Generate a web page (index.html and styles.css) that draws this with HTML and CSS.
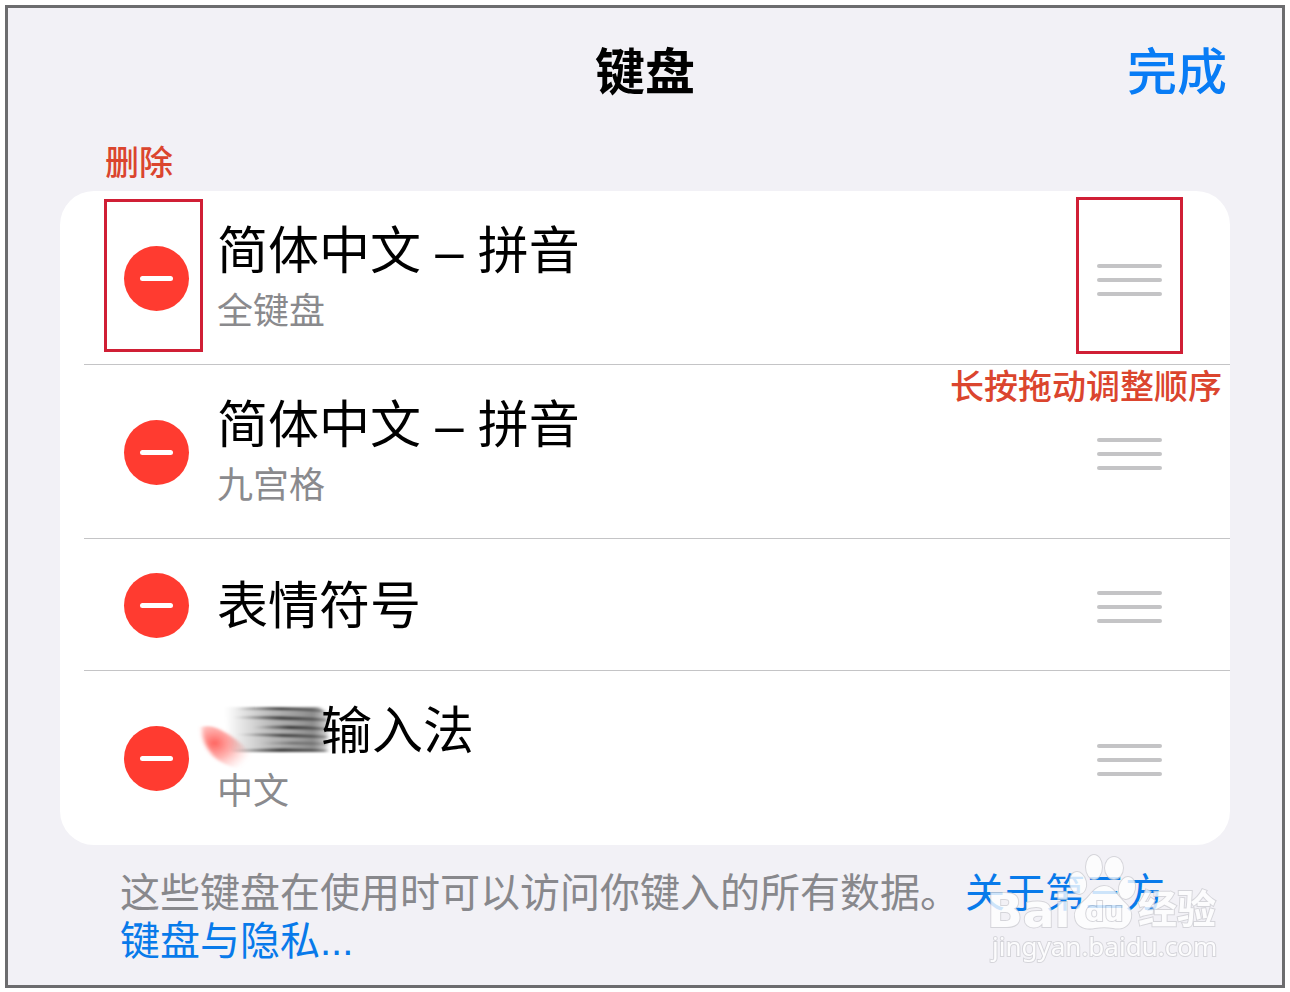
FILE: index.html
```html
<!DOCTYPE html>
<html lang="zh-CN">
<head>
    <meta charset="UTF-8">
    <meta name="viewport" content="width=device-width, initial-scale=1.0">
    <title>键盘</title>
    <link rel="stylesheet" href="styles.css">
</head>
<body>
  <div class="panel">
    <header class="topbar">
      <h1>键盘</h1>
      <button type="button" class="done">完成</button>
    </header>

    <main>
      <p class="note note-delete">删除</p>

      <ul class="keyboards">
        <li class="keyboard">
          <button type="button" class="remove marked" aria-label="删除 全键盘"></button>
          <div class="names">
            <h2>简体中文 – 拼音</h2>
            <p>全键盘</p>
          </div>
          <button type="button" class="handle marked" aria-label="移动 全键盘"><span></span><span></span><span></span></button>
        </li>
        <li class="keyboard">
          <button type="button" class="remove" aria-label="删除 九宫格"></button>
          <div class="names">
            <h2>简体中文 – 拼音</h2>
            <p>九宫格</p>
          </div>
          <button type="button" class="handle" aria-label="移动 九宫格"><span></span><span></span><span></span></button>
          <p class="note note-drag">长按拖动调整顺序</p>
        </li>
        <li class="keyboard short">
          <button type="button" class="remove" aria-label="删除 表情符号"></button>
          <div class="names">
            <h2>表情符号</h2>
          </div>
          <button type="button" class="handle" aria-label="移动 表情符号"><span></span><span></span><span></span></button>
        </li>
        <li class="keyboard">
          <button type="button" class="remove" aria-label="删除 输入法"></button>
          <div class="names">
            <h2 class="smudged">输入法
              <!-- Mancha que tapa la marca -->
              <svg class="smudge" viewBox="0 0 140 76" aria-hidden="true">
                <defs>
                  <linearGradient id="fade">
                    <stop offset="0" stop-color="#000" stop-opacity="0"/>
                    <stop offset="0.45" stop-color="#000" stop-opacity="0.28"/>
                    <stop offset="0.85" stop-color="#000" stop-opacity="0.45"/>
                    <stop offset="1" stop-color="#000" stop-opacity="0.15"/>
                  </linearGradient>
                  <linearGradient id="streak">
                    <stop offset="0" stop-color="#000" stop-opacity="0"/>
                    <stop offset="0.5" stop-color="#000" stop-opacity="0.65"/>
                    <stop offset="1" stop-color="#000" stop-opacity="0.3"/>
                  </linearGradient>
                  <radialGradient id="red" cx="0.25" cy="0.4" r="0.75">
                    <stop offset="0" stop-color="#ff5a55" stop-opacity="0.95"/>
                    <stop offset="0.45" stop-color="#ff7a75" stop-opacity="0.6"/>
                    <stop offset="1" stop-color="#ffb0ad" stop-opacity="0"/>
                  </radialGradient>
                  <filter id="soft" x="-20%" y="-20%" width="140%" height="140%">
                    <feGaussianBlur stdDeviation="2 1"/>
                  </filter>
                </defs>
                <path d="M5 25Q12 22 22 27Q40 36 54 52Q60 68 44 67Q28 65 16 54Q4 40 5 25Z" fill="url(#red)" filter="url(#soft)"/>
                <g filter="url(#soft)">
                  <path d="M28 5H122L132 12L130 50H34Z" fill="url(#fade)"/>
                  <path d="M40 6Q90 4 126 8V10Q90 7 40 8Z" fill="url(#streak)"/>
                  <path d="M36 15Q90 13 130 17V19Q90 18 36 16Z" fill="url(#streak)"/>
                  <path d="M56 25Q94 22 130 26V28Q94 27 56 26Z" fill="url(#streak)"/>
                  <path d="M40 32Q90 31 130 34V36Q90 35 40 33Z" fill="url(#streak)"/>
                  <path d="M62 41Q94 39 130 41V43Q94 42 62 42Z" fill="url(#streak)" opacity="0.5"/>
                  <path d="M36 48Q94 45 130 48V50H36Z" fill="url(#streak)"/>
                </g>
              </svg>
            </h2>
            <p>中文</p>
          </div>
          <button type="button" class="handle" aria-label="移动 输入法"><span></span><span></span><span></span></button>
        </li>
      </ul>

      <p class="privacy">这些键盘在使用时可以访问你键入的所有数据。<a href="#">关于第三方键盘与隐私...</a></p>
    </main>

    <!-- Marca de agua -->
    <svg class="watermark" viewBox="0 0 240 120" aria-hidden="true">
      <g class="mark">
        <text class="brand" x="1" y="76" font-size="47">Bai</text>
        <ellipse cx="108" cy="16" rx="8" ry="12"/>
        <ellipse cx="128" cy="17" rx="9" ry="11"/>
        <ellipse cx="92" cy="32" rx="8" ry="11" transform="rotate(-12 92 32)"/>
        <ellipse cx="141" cy="37" rx="8" ry="11" transform="rotate(12 141 37)"/>
        <path d="M118 35C127 35 130 43 137 50C144 56 146 61 145 67C143 76 135 79 127 77C121 76 115 76 109 77C100 79 90 76 89 66C88 60 92 55 98 50C105 44 109 35 118 35Z"/>
        <text class="du" x="99" y="70" font-size="27">du</text>
        <text class="cn" x="152" y="72" font-size="39">经验</text>
        <text class="site" x="6" y="105" font-size="26">jingyan.baidu.com</text>
      </g>
    </svg>
  </div>
</body>
</html>
```

FILE: styles.css
```css
* {
  box-sizing: border-box;
}

body {
  margin: 0;
  padding: 5px;
  background-color: #fff;
  color: #000;
  font-family: "Liberation Sans", "Noto Sans CJK SC", sans-serif;
}

h1, h2, p, ul {
  margin: 0;
  padding: 0;
  font-weight: 400;
}

button {
  padding: 0;
  border: none;
  background: none;
  font-family: inherit;
  cursor: pointer;
}

a {
  color: #087aea;
  text-decoration: none;
}

.panel {
  position: relative;
  min-height: calc(100vh - 9px);
  padding: 0 52px 20px;
  border: 3px solid #6c6c6e;
  background-color: #f2f1f6;
}

/* Header */
.topbar {
  display: grid;
  grid-template-columns: 1fr auto 1fr;
  align-items: center;
  height: 120px;
}

.topbar h1 {
  grid-column: 2;
  font-size: 50px;
  font-weight: 700;
}

.done {
  justify-self: end;
  margin-right: 3px;
  color: #087cf5;
  font-size: 50px;
  font-weight: 500;
}

/* Anotaciones en rojo */
.note {
  color: #db452e;
  font-size: 34px;
  font-weight: 500;
  line-height: 48px;
}

.note-delete {
  margin-left: 45px;
  padding: 11px 0 4px;
}

.note-drag {
  position: absolute;
  top: -2px;
  right: 8px;
}

.marked::after {
  content: "";
  position: absolute;
  border: 3px solid #d01f35;
}

.remove.marked::after {
  inset: -47px -14px -41px -20px;
}

.handle.marked::after {
  inset: -67px -21px -58px;
}

/* Lista de teclados */
.keyboards {
  list-style: none;
  border-radius: 34px;
  background-color: #fff;
}

.keyboard {
  position: relative;
  display: flex;
  align-items: center;
  gap: 28px;
  height: 174px;
  padding: 0 68px 0 64px;
}

.keyboard.short {
  height: 132px;
}

.keyboard:not(:last-child)::after {
  content: "";
  position: absolute;
  left: 24px;
  right: 0;
  bottom: 0;
  border-bottom: 1px solid #c4c4c6;
}

.names {
  flex: 1;
  padding-top: 3px;
}

.names h2 {
  font-size: 51px;
  line-height: 64px;
}

.names p {
  color: #8a8a8d;
  font-size: 36px;
  line-height: 56px;
}

.remove {
  position: relative;
  display: flex;
  align-items: center;
  justify-content: center;
  width: 65px;
  height: 65px;
  border-radius: 50%;
  background-color: #ff3b30;
}

.remove::before {
  content: "";
  width: 33px;
  height: 5px;
  border-radius: 3px;
  background-color: #fff;
}

.handle {
  position: relative;
  display: flex;
  flex-direction: column;
  gap: 10px;
  width: 65px;
  margin-top: 3px;
}

.handle span {
  height: 4px;
  border-radius: 2px;
  background-color: #c4c4c6;
}

.smudged {
  position: relative;
  padding-left: 104px;
}

.smudge {
  position: absolute;
  top: 2px;
  left: -20px;
  width: 140px;
  height: 76px;
}

/* Texto inferior */
.privacy {
  padding: 24px 40px 0 60px;
  color: #88888c;
  font-size: 40px;
  line-height: 48px;
}

.privacy a {
  margin-left: 5px;
}

.watermark {
  position: absolute;
  right: 56px;
  bottom: 14px;
  width: 240px;
  height: 120px;
  pointer-events: none;
}

.mark {
  fill: #fff;
  stroke: #cfcfd4;
  stroke-width: 2px;
  paint-order: stroke;
  opacity: 0.8;
}

.brand, .du {
  font-family: "DejaVu Sans", sans-serif;
  font-weight: 700;
}

.cn {
  font-family: "Noto Sans CJK SC", sans-serif;
  font-weight: 700;
}

.site {
  font-family: "Noto Sans", sans-serif;
}
```
